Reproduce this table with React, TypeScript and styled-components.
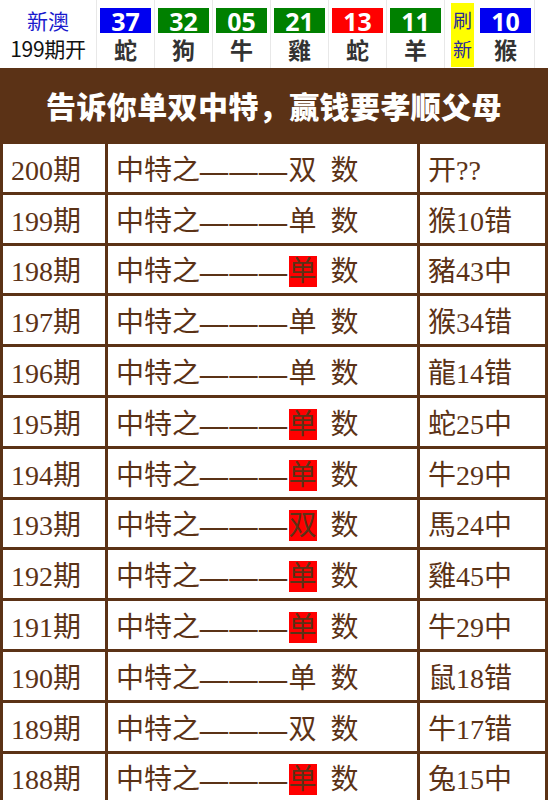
import styled, { createGlobalStyle } from "styled-components";

const GlobalStyle = createGlobalStyle`
  body {
    margin: 0;
    background: #ffffff;
    font-family: "Liberation Sans", "Noto Sans CJK SC", sans-serif;
  }
`;

const Page = styled.div`
  width: 548px;
`;

const TopBar = styled.div`
  display: flex;
  height: 68px;
  align-items: stretch;
`;

const TitleCell = styled.div`
  width: 97px;
  display: flex;
  flex-direction: column;
  align-items: center;
  justify-content: center;
  font-family: "Noto Sans CJK SC", sans-serif;
  font-size: 21px;
  line-height: 28px;
  border-right: 1px solid #e8e8e8;
  box-sizing: border-box;
`;

const Area = styled.span`
  color: #1a1acd;
`;

const Issue = styled.span`
  color: #111;
  letter-spacing: -0.3px;
`;

const BallCell = styled.div`
  width: 58px;
  box-sizing: border-box;
  display: flex;
  flex-direction: column;
  align-items: center;
  padding: 8px 3px 0;
  border-right: 1px solid #e8e8e8;
`;

const Ball = styled.div<{ bg: string }>`
  width: 100%;
  height: 25px;
  box-sizing: border-box;
  padding-top: 1px;
  background: ${(p) => p.bg};
  color: #fff;
  font-family: "Open Sans", "Liberation Sans", sans-serif;
  font-weight: 700;
  font-size: 25px;
  line-height: 25px;
  text-align: center;
`;

const Zodiac = styled.div`
  margin-top: 3px;
  font-family: "Noto Sans CJK SC", sans-serif;
  font-weight: 700;
  font-size: 23px;
  line-height: 27px;
  color: #333;
`;

const Refresh = styled.div`
  width: 23px;
  margin: 3px 3px 1px 6px;
  background: #ffff00;
  color: #2a2a9a;
  font-family: "Noto Sans CJK SC", sans-serif;
  font-size: 19px;
  line-height: 29px;
  padding-top: 2px;
  text-align: center;
`;

const Banner = styled.div`
  height: 73px;
  background: #5b3216;
  color: #fff;
  display: flex;
  align-items: center;
  justify-content: center;
  font-family: "Noto Sans CJK SC", sans-serif;
  font-weight: 900;
  font-size: 30px;
  letter-spacing: 0.4px;
`;

const Table = styled.table`
  width: 548px;
  table-layout: fixed;
  border-collapse: collapse;
  border: 3px solid #5b3216;
`;

const Cell = styled.td`
  height: 47.8px;
  border: 3px solid #5b3216;
  padding: 0 0 0 8px;
  color: #5b3216;
  font-family: "Liberation Serif", "Noto Sans CJK SC", serif;
  font-size: 28px;
  white-space: pre;
  overflow: hidden;
`;

const Dash = styled.span`
  font-weight: 700;
  letter-spacing: 1.5px;
`;

const Mark = styled.span<{ hot: boolean }>`
  background: ${(p) => (p.hot ? "#ff0000" : "transparent")};
`;

const balls = [
  { n: "37", z: "蛇", c: "#0000f0" },
  { n: "32", z: "狗", c: "#008000" },
  { n: "05", z: "牛", c: "#008000" },
  { n: "21", z: "雞", c: "#008000" },
  { n: "13", z: "蛇", c: "#ff0000" },
  { n: "11", z: "羊", c: "#008000" },
];

const rows = [
  ["200期", "双", "开??"],
  ["199期", "单", "猴10错"],
  ["198期", "单", "豬43中"],
  ["197期", "单", "猴34错"],
  ["196期", "单", "龍14错"],
  ["195期", "单", "蛇25中"],
  ["194期", "单", "牛29中"],
  ["193期", "双", "馬24中"],
  ["192期", "单", "雞45中"],
  ["191期", "单", "牛29中"],
  ["190期", "单", "鼠18错"],
  ["189期", "双", "牛17错"],
  ["188期", "单", "兔15中"],
];

export default function App() {
  return (
    <Page>
      <GlobalStyle />
      <TopBar>
        <TitleCell>
          <Area>新澳</Area>
          <Issue>199期开</Issue>
        </TitleCell>
        {balls.map((b, i) => (
          <BallCell key={i}>
            <Ball bg={b.c}>{b.n}</Ball>
            <Zodiac>{b.z}</Zodiac>
          </BallCell>
        ))}
        <Refresh>刷新</Refresh>
        <BallCell>
          <Ball bg="#0000f0">10</Ball>
          <Zodiac>猴</Zodiac>
        </BallCell>
      </TopBar>
      <Banner>告诉你单双中特，赢钱要孝顺父母</Banner>
      <Table>
        <colgroup>
          <col style={{ width: 105 }} />
          <col style={{ width: 312 }} />
          <col />
        </colgroup>
        <tbody>
          {rows.map((r) => (
            <tr key={r[0]}>
              <Cell>{r[0]}</Cell>
              <Cell>
                中特之<Dash>———</Dash>
                <Mark hot={r[2].endsWith("中")}>{r[1]}</Mark>  数
              </Cell>
              <Cell>{r[2]}</Cell>
            </tr>
          ))}
        </tbody>
      </Table>
    </Page>
  );
}
